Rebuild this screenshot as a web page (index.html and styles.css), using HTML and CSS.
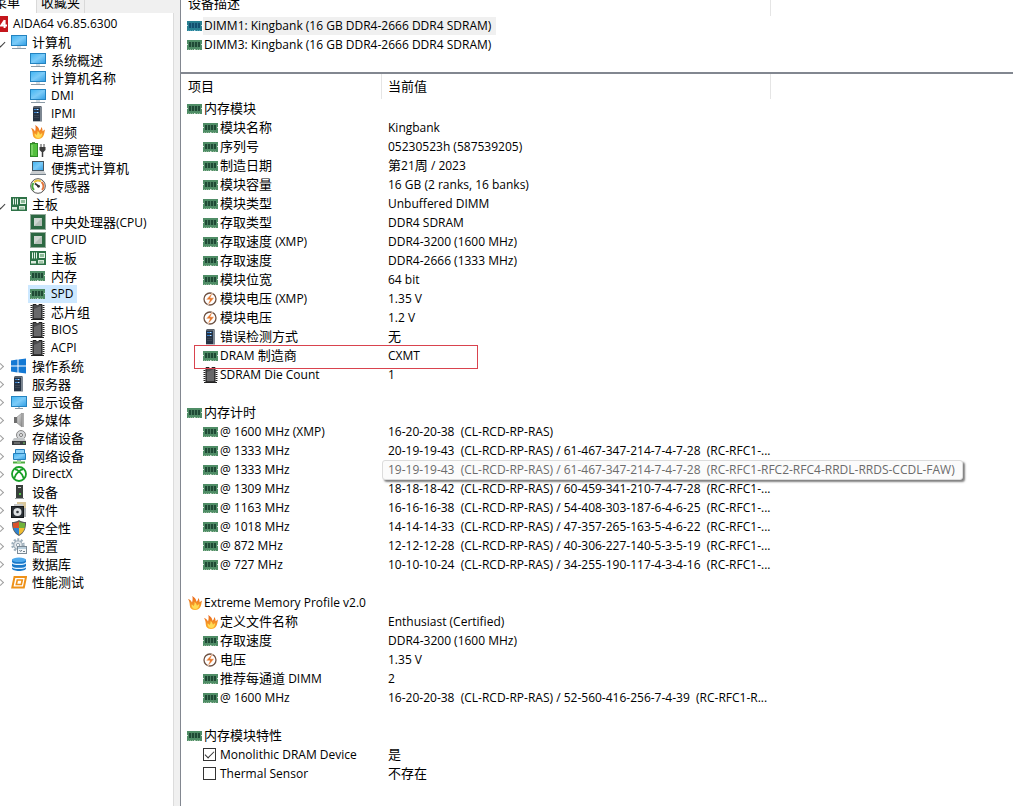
FILE: index.html
```html
<!DOCTYPE html>
<html lang="zh-CN">
<head>
    <meta charset="UTF-8">
    <meta name="viewport" content="width=device-width, initial-scale=1.0">
    <title>AIDA64</title>
    <link rel="stylesheet" href="styles.css">
</head>
<body>
    <svg class="sprite" width="0" height="0" aria-hidden="true">
        <defs>
            <linearGradient id="screen" x1="0" y1="0" x2="1" y2="1">
                <stop offset="0" stop-color="#3fb4f3"/>
                <stop offset="0.5" stop-color="#7ccbf8"/>
                <stop offset="1" stop-color="#2f9de4"/>
            </linearGradient>
            <linearGradient id="metal" x1="0" y1="0" x2="1" y2="1">
                <stop offset="0" stop-color="#e2e2e2"/>
                <stop offset="1" stop-color="#8c8c8c"/>
            </linearGradient>
            <linearGradient id="fire" x1="0" y1="0" x2="0" y2="1">
                <stop offset="0" stop-color="#e8641b"/>
                <stop offset="1" stop-color="#ffb52e"/>
            </linearGradient>
        </defs>
        <symbol id="i-logo" viewBox="0 0 16 16">
            <rect width="16" height="16" fill="#c4161c"/>
            <path d="M12.6 4v8M12.6 4.4L9.2 9.6H15" fill="none" stroke="#fff" stroke-width="2"/>
            <path d="M6 4.5C3 5 2 7 2.2 9.500a2 2 0 1 0 2-2" fill="none" stroke="#fff" stroke-width="1.8"/>
        </symbol>
        <symbol id="i-monitor" viewBox="0 0 16 16">
            <rect x="0.5" y="1.500" width="15" height="10" fill="url(#screen)" stroke="#2483c0"/>
            <path d="M6 12h4v2H6z" fill="#d5dde2"/>
            <path d="M1 14.500h14" stroke="#8b9aa6"/>
        </symbol>
        <symbol id="i-display" viewBox="0 0 16 16">
            <rect x="0.5" y="2.500" width="15" height="10" fill="url(#screen)" stroke="#2483c0"/>
            <path d="M7 13h2v1H7z" fill="#b9c6ce"/>
            <path d="M4 14.500h8" stroke="#8b9aa6"/>
        </symbol>
        <symbol id="i-server" viewBox="0 0 16 16">
            <path d="M3 1l1-1h7l1 1v14H3z" fill="#59616c"/>
            <path d="M3 2h7v13H3z" fill="#263344"/>
            <path d="M10 1h2v14h-2z" fill="#7d8792"/>
            <path d="M4 3.500h5M4 6.500h5" stroke="#3f83c9"/>
            <path d="M7 3h1v1H7zM7 6h1v1H7z" fill="#c9e6ff"/>
            <path d="M4 9.500h5M4 11.500h5" stroke="#3b4654"/>
            <path d="M3 15.500h9" stroke="#b8bcc0"/>
        </symbol>
        <symbol id="i-fire" viewBox="0 0 16 16">
            <path d="M1 4c2 .6 3.200 1.800 4 3.500C5.600 5.500 6 3 5.200 1c2.600 1.400 4 3.500 4.300 5.800C10.600 6 11.300 4.500 11.200 3c1.200 1.500 1.500 2.800 1.300 4.200L15 5.500c-.6 2.300-.4 3.500-1.200 5.500-1 2.600-2.800 4-5.800 4-3.300 0-5-1.600-5.200-4.500C2.700 8 2.400 6 1 4z" fill="url(#fire)"/>
            <path d="M4.500 9.500c1 .3 1.800 1 2.100 1.700C7.300 10 7.800 8.500 7.500 7c1.500 1.100 2.200 2.500 2.400 3.700l2.400-1.700c-.2 3-1.600 5.100-4 5.100-2.300 0-3.800-1.800-3.800-4.600z" fill="#ffdc55"/>
        </symbol>
        <symbol id="i-power" viewBox="0 0 16 16">
            <path d="M2 0h3v2H2z" fill="#5a8a4a"/>
            <rect x="0.500" y="1.500" width="7" height="13" fill="#54bf3e" stroke="#2e8a27"/>
            <path d="M2 3v10" stroke="#a0e58e"/>
            <path d="M11 2v3M14 2v3" stroke="#444"/>
            <path d="M9.500 5h6v3l-2 2h-2l-2-2z" fill="#3c3c3c"/>
            <path d="M12.500 10v5" stroke="#3c3c3c" stroke-width="1.500"/>
        </symbol>
        <symbol id="i-laptop" viewBox="0 0 16 16">
            <rect x="2.500" y="1.500" width="11" height="9" fill="url(#screen)" stroke="#455560"/>
            <path d="M2 11h12l2 3H0z" fill="#c9cdd0"/>
            <path d="M0 14.500h16" stroke="#74808a"/>
        </symbol>
        <symbol id="i-gauge" viewBox="0 0 16 16">
            <circle cx="8" cy="8" r="7.300" fill="#fff" stroke="#555" stroke-width="1"/>
            <path d="M4 12A5.500 5.500 0 0 1 3.500 5" fill="none" stroke="#47a83c" stroke-width="2"/>
            <path d="M4 4.400A5.500 5.500 0 0 1 11 3.500" fill="none" stroke="#e8c13a" stroke-width="2"/>
            <path d="M11.500 4A5.500 5.500 0 0 1 12 12" fill="none" stroke="#e3753b" stroke-width="2"/>
            <path d="M5 5.500l4 3" stroke="#333" stroke-width="1.600"/>
            <circle cx="8.500" cy="8.300" r="1.400" fill="#333"/>
        </symbol>
        <symbol id="i-board" viewBox="0 0 16 16">
            <rect y="1" width="16" height="14" fill="#2e7247"/>
            <path d="M2.500 2.500v6M4.500 2.500v6M6.500 2.500v6" stroke="#e6f2e8"/>
            <rect x="9.500" y="3.500" width="5" height="4" fill="#8fbc9a" stroke="#e6f2e8"/>
            <path d="M1 11h5v2.500H1zM8 10h6v3.500H8z" fill="#dcebdd"/>
            <path d="M9 12h4" stroke="#6aa277"/>
        </symbol>
        <symbol id="i-cpu" viewBox="0 0 16 16">
            <rect x="1" y="1" width="14" height="14" fill="#2c6842"/>
            <rect x="0.500" y="0.500" width="15" height="15" fill="none" stroke="#2c5b3b" stroke-dasharray="1 1"/>
            <rect x="4" y="4" width="8" height="8" fill="#cfd6d1"/>
            <path d="M4 12l8-8v8z" fill="#b4bfb7"/>
        </symbol>
        <symbol id="i-ram" viewBox="0 0 16 16">
            <path d="M0 3h15v10H0z" fill="#4f8d66"/>
            <path d="M0 7.500h1M14 7.500h1M7 12.500h1" stroke="#d5e4d9"/>
            <path d="M1 12.500h6M8 12.500h6" stroke="#8fb898" stroke-dasharray="1 1"/>
            <path d="M2 5h11v5H2z" fill="#1f4a35"/>
            <path d="M4.500 5v5M7.500 5v5M10.500 5v5" stroke="#4a7d60"/>
        </symbol>
        <symbol id="i-ram-active" viewBox="0 0 16 16">
            <path d="M0 3h15v10H0z" fill="#287f91"/>
            <path d="M0 7.500h1M14 7.500h1M7 12.500h1" stroke="#b5d7e4"/>
            <path d="M1 12.500h6M8 12.500h6" stroke="#4ba0b9" stroke-dasharray="1 1"/>
            <path d="M2 5h11v5H2z" fill="#12506f"/>
            <path d="M4.500 5v5M7.500 5v5M10.500 5v5" stroke="#2a7390"/>
        </symbol>
        <symbol id="i-chip" viewBox="0 0 16 16">
            <path d="M1.500 1v14M13.500 1v14" stroke="#222" stroke-width="2" stroke-dasharray="1 1"/>
            <path d="M3 .5h3L7.500 2 9 .5h3V15H3z" fill="#4b4b4d" stroke="#222"/>
            <path d="M4 14V5l7-3v12z" fill="#68686a"/>
            <path d="M1 15.500h13" stroke="#222"/>
        </symbol>
        <symbol id="i-windows" viewBox="0 0 16 16">
            <path d="M0 2.500L6.500 1.600V7.500H0zM7.500 1.400L15 .4V7.500H7.500zM0 8.500h6.500v5.900L0 13.500zM7.500 8.500H15v7.100l-7.500-1z" fill="#1479d4"/>
        </symbol>
        <symbol id="i-speaker" viewBox="0 0 16 16">
            <path d="M3 5h3v6H3z" fill="#6d6d6d"/>
            <path d="M6 5l5-4v14l-5-4z" fill="url(#metal)" stroke="#777" stroke-width="0.500"/>
            <path d="M12 1v14" stroke="#909090" stroke-width="1.500"/>
        </symbol>
        <symbol id="i-disk" viewBox="0 0 16 16">
            <circle cx="10" cy="5" r="4.500" fill="#d6d8da" stroke="#888"/>
            <circle cx="10" cy="5" r="1.500" fill="#fff" stroke="#777"/>
            <path d="M3 8h10l2 3H1z" fill="#c2c5c7"/>
            <rect x="1" y="11" width="14" height="4" fill="#3b3e40"/>
            <path d="M3 13h6" stroke="#989898"/>
            <path d="M12 12.500h2v1h-2z" fill="#7bd069"/>
        </symbol>
        <symbol id="i-network" viewBox="0 0 16 16">
            <path d="M4.500 1.500h9v5h-9z" fill="#8fd2f8" stroke="#2580bc"/>
            <path d="M2.500 5.500h12v6h-12z" fill="url(#screen)" stroke="#2580bc"/>
            <path d="M6 12h4v1H6z" fill="#9aabb5"/>
            <path d="M2 14.500h12" stroke="#4cab40" stroke-width="2"/>
            <path d="M6 14.500h4" stroke="#8fdc7e" stroke-width="2"/>
        </symbol>
        <symbol id="i-xbox" viewBox="0 0 16 16">
            <circle cx="8" cy="8" r="7" fill="#fff" stroke="#18a028" stroke-width="1.800"/>
            <path d="M3 13C4 9.500 6 6.800 8 5.300 10 6.800 12 9.500 13 13M4 3.300C6 3.300 7 4.300 8 5.300 9 4.300 10 3.300 12 3.300" fill="none" stroke="#18a028" stroke-width="1.700"/>
        </symbol>
        <symbol id="i-device" viewBox="0 0 16 16">
            <rect x="5" y="1" width="7" height="13" fill="#39403c"/>
            <path d="M7 3h3v1H7z" fill="#cfd3d0"/>
            <path d="M8 9h2v2H8z" fill="#57c24b"/>
            <path d="M4 14.500h9" stroke="#9b9fa1"/>
        </symbol>
        <symbol id="i-software" viewBox="0 0 16 16">
            <path d="M6 0h9v12H6z" fill="#d9c79c"/>
            <path d="M3 2h9v5H3z" fill="#c7c9ca"/>
            <rect x="0.500" y="4.500" width="12" height="11" fill="#2b3036" stroke="#15181b"/>
            <circle cx="6.500" cy="10" r="4" fill="#dfe2e4"/>
            <circle cx="6.500" cy="10" r="1.300" fill="#30353b"/>
            <path d="M13 6h2v9h-2z" fill="#a9adb0"/>
        </symbol>
        <symbol id="i-shield" viewBox="0 0 16 16">
            <path d="M8 0c2 1.500 4.500 2 7 2 .3 6-1.500 11-7 14C2.500 13 .7 8 1 2c2.500 0 5-.5 7-2z" fill="#5a5c5e"/>
            <path d="M8 1.400V8H2.300C2 6.300 2 4.700 2 3c2.200 0 4.300-.5 6-1.600z" fill="#d9522c"/>
            <path d="M8 1.400V8h5.700c.3-1.700.3-3.300.3-5-2.200 0-4.300-.5-6-1.600z" fill="#70b23b"/>
            <path d="M8 8H2.300c.8 3 2.500 5.200 5.700 6.800z" fill="#3183cc"/>
            <path d="M8 8h5.700c-.8 3-2.500 5.200-5.700 6.800z" fill="#f1bd30"/>
        </symbol>
        <symbol id="i-config" viewBox="0 0 16 16">
            <circle cx="7" cy="7" r="5.500" fill="none" stroke="#9fb0bd" stroke-width="2.500" stroke-dasharray="2 1.500"/>
            <circle cx="7" cy="7" r="4.200" fill="#e4e9ed" stroke="#93a3af"/>
            <circle cx="7" cy="7" r="1.600" fill="#fff" stroke="#93a3af"/>
            <rect x="6.500" y="8.500" width="9" height="7" fill="#f5f8fa" stroke="#7c8b97"/>
            <path d="M7 10h8" stroke="#7fa3bd"/>
            <path d="M8.500 12l1.200 1.500 1.300-1.500M12 13.500h2" fill="none" stroke="#6d7d89"/>
        </symbol>
        <symbol id="i-database" viewBox="0 0 16 16">
            <path d="M1 3.500v9c0 3.300 14 3.300 14 0v-9z" fill="#1979c9"/>
            <ellipse cx="8" cy="3.800" rx="7" ry="2.300" fill="#4ea9ec"/>
            <path d="M1 6.500c1 2.600 13 2.600 14 0M1 10.500c1 2.600 13 2.600 14 0" fill="none" stroke="#e6f4ff" stroke-width="1.200"/>
        </symbol>
        <symbol id="i-bench" viewBox="0 0 16 16">
            <path d="M3.500 3H15l-2.200 10.500H1.300z" fill="none" stroke="#ee9118" stroke-width="2"/>
            <path d="M6.300 6h5l-1 4.500h-5z" fill="none" stroke="#ee9118" stroke-width="1.600"/>
        </symbol>
        <symbol id="i-volt" viewBox="0 0 16 16">
            <circle cx="7" cy="8" r="6" fill="#fff" stroke="#6d5142" stroke-width="1.300"/>
            <path d="M10 1L3 8.800h3.800L4.300 15l7-8.200H7.500z" fill="#e5762b" stroke="#fff" stroke-width="0.500"/>
        </symbol>
    </svg>

    <div class="window">
        <aside class="sidebar">
            <div class="tabs">
                <button class="tab active" type="button">菜单</button>
                <button class="tab" type="button">收藏夹</button>
            </div>
            <nav class="tree">
                <a class="node" href="#"><svg class="icon"><use href="#i-logo"/></svg><span>AIDA64 v6.85.6300</span></a>
                <ul>
                    <li>
                        <details open>
                            <summary class="node"><span class="arrow"></span><svg class="icon"><use href="#i-monitor"/></svg><span class="zh">计算机</span></summary>
                            <ul>
                                <li><a class="node" href="#"><svg class="icon"><use href="#i-monitor"/></svg><span class="zh">系统概述</span></a></li>
                                <li><a class="node" href="#"><svg class="icon"><use href="#i-monitor"/></svg><span class="zh">计算机名称</span></a></li>
                                <li><a class="node" href="#"><svg class="icon"><use href="#i-monitor"/></svg><span>DMI</span></a></li>
                                <li><a class="node" href="#"><svg class="icon"><use href="#i-server"/></svg><span>IPMI</span></a></li>
                                <li><a class="node" href="#"><svg class="icon"><use href="#i-fire"/></svg><span class="zh">超频</span></a></li>
                                <li><a class="node" href="#"><svg class="icon"><use href="#i-power"/></svg><span class="zh">电源管理</span></a></li>
                                <li><a class="node" href="#"><svg class="icon"><use href="#i-laptop"/></svg><span class="zh">便携式计算机</span></a></li>
                                <li><a class="node" href="#"><svg class="icon"><use href="#i-gauge"/></svg><span class="zh">传感器</span></a></li>
                            </ul>
                        </details>
                    </li>
                    <li>
                        <details open>
                            <summary class="node"><span class="arrow"></span><svg class="icon"><use href="#i-board"/></svg><span class="zh">主板</span></summary>
                            <ul>
                                <li><a class="node" href="#"><svg class="icon"><use href="#i-cpu"/></svg><span><span class="zh">中央处理器</span>(CPU)</span></a></li>
                                <li><a class="node" href="#"><svg class="icon"><use href="#i-cpu"/></svg><span>CPUID</span></a></li>
                                <li><a class="node" href="#"><svg class="icon"><use href="#i-board"/></svg><span class="zh">主板</span></a></li>
                                <li><a class="node" href="#"><svg class="icon"><use href="#i-ram"/></svg><span class="zh">内存</span></a></li>
                                <li><a class="node selected" href="#"><svg class="icon"><use href="#i-ram"/></svg><span>SPD</span></a></li>
                                <li><a class="node" href="#"><svg class="icon"><use href="#i-chip"/></svg><span class="zh">芯片组</span></a></li>
                                <li><a class="node" href="#"><svg class="icon"><use href="#i-chip"/></svg><span>BIOS</span></a></li>
                                <li><a class="node" href="#"><svg class="icon"><use href="#i-chip"/></svg><span>ACPI</span></a></li>
                            </ul>
                        </details>
                    </li>
                    <li><details><summary class="node"><span class="arrow"></span><svg class="icon"><use href="#i-windows"/></svg><span class="zh">操作系统</span></summary></details></li>
                    <li><details><summary class="node"><span class="arrow"></span><svg class="icon"><use href="#i-server"/></svg><span class="zh">服务器</span></summary></details></li>
                    <li><details><summary class="node"><span class="arrow"></span><svg class="icon"><use href="#i-display"/></svg><span class="zh">显示设备</span></summary></details></li>
                    <li><details><summary class="node"><span class="arrow"></span><svg class="icon"><use href="#i-speaker"/></svg><span class="zh">多媒体</span></summary></details></li>
                    <li><details><summary class="node"><span class="arrow"></span><svg class="icon"><use href="#i-disk"/></svg><span class="zh">存储设备</span></summary></details></li>
                    <li><details><summary class="node"><span class="arrow"></span><svg class="icon"><use href="#i-network"/></svg><span class="zh">网络设备</span></summary></details></li>
                    <li><details><summary class="node"><span class="arrow"></span><svg class="icon"><use href="#i-xbox"/></svg><span>DirectX</span></summary></details></li>
                    <li><details><summary class="node"><span class="arrow"></span><svg class="icon"><use href="#i-device"/></svg><span class="zh">设备</span></summary></details></li>
                    <li><details><summary class="node"><span class="arrow"></span><svg class="icon"><use href="#i-software"/></svg><span class="zh">软件</span></summary></details></li>
                    <li><details><summary class="node"><span class="arrow"></span><svg class="icon"><use href="#i-shield"/></svg><span class="zh">安全性</span></summary></details></li>
                    <li><details><summary class="node"><span class="arrow"></span><svg class="icon"><use href="#i-config"/></svg><span class="zh">配置</span></summary></details></li>
                    <li><details><summary class="node"><span class="arrow"></span><svg class="icon"><use href="#i-database"/></svg><span class="zh">数据库</span></summary></details></li>
                    <li><details><summary class="node"><span class="arrow"></span><svg class="icon"><use href="#i-bench"/></svg><span class="zh">性能测试</span></summary></details></li>
                </ul>
            </nav>
        </aside>

        <main class="content">
            <section class="devices">
                <table class="list">
                    <colgroup><col class="col-device"><col></colgroup>
                    <thead>
                        <tr><th class="zh">设备描述</th><th></th></tr>
                    </thead>
                    <tbody>
                        <tr><td><div class="item"><svg class="icon"><use href="#i-ram-active"/></svg><span class="current">DIMM1: Kingbank (16 GB DDR4-2666 DDR4 SDRAM)</span></div></td><td></td></tr>
                        <tr><td><div class="item"><svg class="icon"><use href="#i-ram"/></svg><span>DIMM3: Kingbank (16 GB DDR4-2666 DDR4 SDRAM)</span></div></td><td></td></tr>
                    </tbody>
                </table>
            </section>

            <section class="details">
                <table class="list">
                    <colgroup><col class="col-field"><col class="col-value"><col></colgroup>
                    <thead>
                        <tr><th class="zh">项目</th><th class="zh">当前值</th><th></th></tr>
                    </thead>
                    <tbody>
                        <tr><td colspan="2"><div class="item"><svg class="icon"><use href="#i-ram"/></svg><span class="zh">内存模块</span></div></td></tr>
                        <tr><td><div class="item sub"><svg class="icon"><use href="#i-ram"/></svg><span class="zh">模块名称</span></div></td><td>Kingbank</td></tr>
                        <tr><td><div class="item sub"><svg class="icon"><use href="#i-ram"/></svg><span class="zh">序列号</span></div></td><td>05230523h (587539205)</td></tr>
                        <tr><td><div class="item sub"><svg class="icon"><use href="#i-ram"/></svg><span class="zh">制造日期</span></div></td><td><span class="zh">第</span>21<span class="zh">周</span> / 2023</td></tr>
                        <tr><td><div class="item sub"><svg class="icon"><use href="#i-ram"/></svg><span class="zh">模块容量</span></div></td><td>16 GB (2 ranks, 16 banks)</td></tr>
                        <tr><td><div class="item sub"><svg class="icon"><use href="#i-ram"/></svg><span class="zh">模块类型</span></div></td><td>Unbuffered DIMM</td></tr>
                        <tr><td><div class="item sub"><svg class="icon"><use href="#i-ram"/></svg><span class="zh">存取类型</span></div></td><td>DDR4 SDRAM</td></tr>
                        <tr><td><div class="item sub"><svg class="icon"><use href="#i-ram"/></svg><span><span class="zh">存取速度</span> (XMP)</span></div></td><td>DDR4-3200 (1600 MHz)</td></tr>
                        <tr><td><div class="item sub"><svg class="icon"><use href="#i-ram"/></svg><span class="zh">存取速度</span></div></td><td>DDR4-2666 (1333 MHz)</td></tr>
                        <tr><td><div class="item sub"><svg class="icon"><use href="#i-ram"/></svg><span class="zh">模块位宽</span></div></td><td>64 bit</td></tr>
                        <tr><td><div class="item sub"><svg class="icon"><use href="#i-volt"/></svg><span><span class="zh">模块电压</span> (XMP)</span></div></td><td>1.35 V</td></tr>
                        <tr><td><div class="item sub"><svg class="icon"><use href="#i-volt"/></svg><span class="zh">模块电压</span></div></td><td>1.2 V</td></tr>
                        <tr><td><div class="item sub"><svg class="icon"><use href="#i-server"/></svg><span class="zh">错误检测方式</span></div></td><td class="zh">无</td></tr>
                        <tr class="marked"><td><div class="item sub"><svg class="icon"><use href="#i-ram"/></svg><span>DRAM <span class="zh">制造商</span></span></div></td><td>CXMT</td></tr>
                        <tr><td><div class="item sub"><svg class="icon"><use href="#i-chip"/></svg><span>SDRAM Die Count</span></div></td><td>1</td></tr>
                    </tbody>
                    <tbody>
                        <tr><td colspan="2"></td></tr>
                        <tr><td colspan="2"><div class="item"><svg class="icon"><use href="#i-ram"/></svg><span class="zh">内存计时</span></div></td></tr>
                        <tr><td><div class="item sub"><svg class="icon"><use href="#i-ram"/></svg><span>@ 1600 MHz (XMP)</span></div></td><td>16-20-20-38  (CL-RCD-RP-RAS)</td></tr>
                        <tr><td><div class="item sub"><svg class="icon"><use href="#i-ram"/></svg><span>@ 1333 MHz</span></div></td><td>20-19-19-43  (CL-RCD-RP-RAS) / 61-467-347-214-7-4-7-28  (RC-RFC1-...</td></tr>
                        <tr class="hovered"><td><div class="item sub"><svg class="icon"><use href="#i-ram"/></svg><span>@ 1333 MHz</span></div></td><td><span class="tooltip" role="tooltip">19-19-19-43  (CL-RCD-RP-RAS) / 61-467-347-214-7-4-7-28  (RC-RFC1-RFC2-RFC4-RRDL-RRDS-CCDL-FAW)</span></td></tr>
                        <tr><td><div class="item sub"><svg class="icon"><use href="#i-ram"/></svg><span>@ 1309 MHz</span></div></td><td>18-18-18-42  (CL-RCD-RP-RAS) / 60-459-341-210-7-4-7-28  (RC-RFC1-...</td></tr>
                        <tr><td><div class="item sub"><svg class="icon"><use href="#i-ram"/></svg><span>@ 1163 MHz</span></div></td><td>16-16-16-38  (CL-RCD-RP-RAS) / 54-408-303-187-6-4-6-25  (RC-RFC1-...</td></tr>
                        <tr><td><div class="item sub"><svg class="icon"><use href="#i-ram"/></svg><span>@ 1018 MHz</span></div></td><td>14-14-14-33  (CL-RCD-RP-RAS) / 47-357-265-163-5-4-6-22  (RC-RFC1-...</td></tr>
                        <tr><td><div class="item sub"><svg class="icon"><use href="#i-ram"/></svg><span>@ 872 MHz</span></div></td><td>12-12-12-28  (CL-RCD-RP-RAS) / 40-306-227-140-5-3-5-19  (RC-RFC1-...</td></tr>
                        <tr><td><div class="item sub"><svg class="icon"><use href="#i-ram"/></svg><span>@ 727 MHz</span></div></td><td>10-10-10-24  (CL-RCD-RP-RAS) / 34-255-190-117-4-3-4-16  (RC-RFC1-...</td></tr>
                    </tbody>
                    <tbody>
                        <tr><td colspan="2"></td></tr>
                        <tr><td colspan="2"><div class="item"><svg class="icon"><use href="#i-fire"/></svg><span>Extreme Memory Profile v2.0</span></div></td></tr>
                        <tr><td><div class="item sub"><svg class="icon"><use href="#i-fire"/></svg><span class="zh">定义文件名称</span></div></td><td>Enthusiast (Certified)</td></tr>
                        <tr><td><div class="item sub"><svg class="icon"><use href="#i-ram"/></svg><span class="zh">存取速度</span></div></td><td>DDR4-3200 (1600 MHz)</td></tr>
                        <tr><td><div class="item sub"><svg class="icon"><use href="#i-volt"/></svg><span class="zh">电压</span></div></td><td>1.35 V</td></tr>
                        <tr><td><div class="item sub"><svg class="icon"><use href="#i-ram"/></svg><span><span class="zh">推荐每通道</span> DIMM</span></div></td><td>2</td></tr>
                        <tr><td><div class="item sub"><svg class="icon"><use href="#i-ram"/></svg><span>@ 1600 MHz</span></div></td><td>16-20-20-38  (CL-RCD-RP-RAS) / 52-560-416-256-7-4-39  (RC-RFC1-R...</td></tr>
                    </tbody>
                    <tbody>
                        <tr><td colspan="2"></td></tr>
                        <tr><td colspan="2"><div class="item"><svg class="icon"><use href="#i-ram"/></svg><span class="zh">内存模块特性</span></div></td></tr>
                        <tr><td><label class="item sub"><input type="checkbox" checked><span>Monolithic DRAM Device</span></label></td><td class="zh">是</td></tr>
                        <tr><td><label class="item sub"><input type="checkbox"><span>Thermal Sensor</span></label></td><td class="zh">不存在</td></tr>
                    </tbody>
                </table>
            </section>
        </main>
    </div>
</body>
</html>
```
FILE: styles.css
```css
* {
    box-sizing: border-box;
}

body {
    margin: 0;
    background: #fff;
    color: #000;
    font-family: "Open Sans", "Noto Sans CJK SC", sans-serif;
    font-size: 12px;
    line-height: 16px;
    overflow: hidden;
}

.zh {
    font-family: "Noto Sans CJK SC", sans-serif;
    font-size: 13px;
}

.sprite {
    position: absolute;
}

.icon {
    width: 16px;
    height: 16px;
    flex: none;
}

.window {
    display: grid;
    grid-template-columns: 181px 1fr;
    height: 100vh;
    overflow: hidden;
}

/* Sidebar */
.sidebar {
    display: flex;
    flex-direction: column;
    padding-right: 6px;
    background: #f0f0f0;
    border-right: 1px solid #828790;
    overflow: hidden;
}

.tabs {
    display: flex;
    flex: none;
    height: 22px;
    margin: -9px 0 0 -10px;
}

.tab {
    padding: 0 4px;
    border: 0;
    border-right: 1px solid #d9d9d9;
    background: #f0f0f0;
    font-family: "Noto Sans CJK SC", sans-serif;
    font-size: 13px;
    line-height: 20px;
}

.tab.active {
    width: 47px;
    background: #fff;
    text-align: left;
}

.tree {
    flex: 1;
    padding: 2px 0 0;
    background: #fff;
    border-right: 1px solid #dcdcdc;
}

.tree > .node {
    margin-left: -8px;
}

.tree ul {
    margin: 0;
    padding: 0;
    list-style: none;
}

.tree > ul {
    margin-left: -8px;
}

.tree ul ul {
    padding-left: 36px;
}

.node {
    display: flex;
    align-items: center;
    gap: 3px;
    width: max-content;
    height: 18px;
    padding: 0 3px 0 0;
    color: #000;
    text-decoration: none;
    white-space: nowrap;
    cursor: default;
}

.tree ul ul .node {
    padding-left: 2px;
}

.node > span:last-child {
    padding-left: 2px;
}

.node.selected {
    background: #cce8ff;
}

.arrow {
    display: flex;
    justify-content: center;
    width: 16px;
}

.arrow::before {
    content: "";
    width: 4px;
    height: 4px;
    border: solid #a0a0a0;
    border-width: 1px 1px 0 0;
    transform: rotate(45deg);
}

details[open] > summary > .arrow::before {
    width: 6px;
    height: 6px;
    border-color: #404040;
    transform: rotate(135deg);
}

/* Lists on the right */
.content {
    min-width: 0;
    overflow: hidden;
}

.devices {
    padding-bottom: 18px;
    border-bottom: 2px solid #828790;
}

.devices .list {
    margin-top: -9px;
}

.list {
    width: 100%;
    border-collapse: separate;
    border-spacing: 0;
    table-layout: fixed;
}

.col-device {
    width: 590px;
}

.col-field {
    width: 201px;
}

.col-value {
    width: 389px;
}

.list th {
    height: 25px;
    padding: 0 6px 2px;
    border-right: 1px solid #e5e5e5;
    font-weight: normal;
    text-align: left;
}

.list th:first-child {
    padding-left: 7px;
}

.list th:last-child {
    border-right: 0;
}

.list td {
    height: 19px;
    padding: 0 0 0 6px;
    white-space: pre;
}

.item {
    display: flex;
    align-items: center;
    gap: 1px;
}

.item.sub {
    padding-left: 16px;
}

.item .zh,
.list td.zh {
    line-height: 14px;
}

.item > .zh,
.list td.zh {
    padding-bottom: 2px;
}

.current {
    margin-left: -1px;
    padding: 1px 5px 1px 1px;
    background: #f0f0f0;
}

.item input {
    appearance: none;
    width: 13px;
    height: 13px;
    margin: 0 3px 0 0;
    border: 1px solid #333;
    background: #fff;
}

.item input:checked::before {
    content: "";
    display: block;
    width: 8px;
    height: 4px;
    margin: 2px 0 0 1px;
    border: solid #333;
    border-width: 0 0 1px 1px;
    transform: rotate(-45deg);
}

.marked,
.hovered {
    position: relative;
}

.marked::after {
    content: "";
    position: absolute;
    top: -1px;
    left: 13px;
    width: 282px;
    height: 22px;
    border: 1px solid #d9434e;
}

.tooltip {
    position: absolute;
    top: 0;
    left: 201px;
    z-index: 1;
    padding: 1px 7px 1px 5px;
    border: 1px solid #dcdcdc;
    border-radius: 3px;
    background: #fbfbfb;
    box-shadow: 2px 2px 2px rgba(0, 0, 0, 0.5);
    color: #6b6b6b;
}
```
